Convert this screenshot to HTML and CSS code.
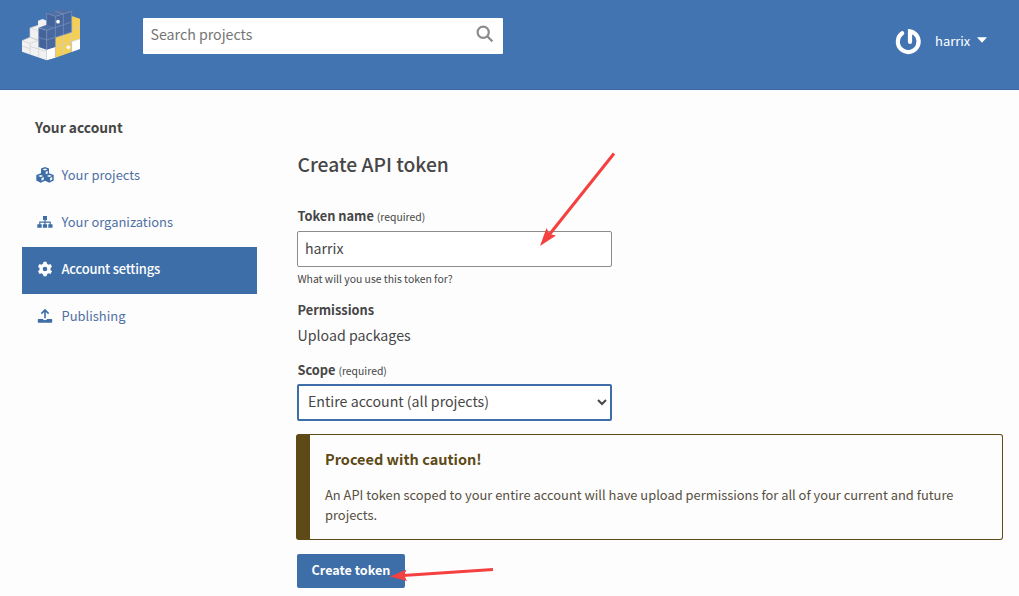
FILE: index.html
```html
<!DOCTYPE html>
<html lang="en">
<head>
<meta charset="utf-8">
<title>Create API token</title>
<link rel="stylesheet" href="styles.css">
</head>
<body>
<header class="site-header">
  <svg class="logo" viewBox="0 0 270 210">
    <path fill="#f1f1f1" d="M36 122L60 112V84L84 76V62L98 57L110 62V181L36 155Z"/>
    <path fill="#fff" d="M110 148L136 140V173L110 181ZM185 122L210 115V147L185 156Z"/>
    <path fill="#43639a" d="M86 84L110 91V149L86 141ZM110 40L136 49V83L110 75Z"/>
    <path fill="#4768a0" d="M110 91L136 82V49L185 34V98L136 114V141L110 149Z"/>
    <path fill="#4f70a4" d="M110 40L160 26L185 34L136 50ZM86 83L110 74L136 82L110 91Z"/>
    <path fill="#f3cf57" d="M136 113L185 97V48L210 56V116L185 124V156L136 173Z"/>
    <g fill="none" stroke="#cdcdd2" stroke-width="2">
      <path d="M36 122L60 130V163M60 112L86 121V171M60 84L86 93M36 122L60 112M60 130L86 121L60 112V84M60 139L110 155M84 76L60 84M36 138L60 146"/>
      <path d="M136 141V173M160 105V165M185 97V156M136 141L210 117M185 88L210 80"/>
    </g>
    <path fill="none" stroke="#8195bb" stroke-width="2" d="M86 84V141M86 84L110 91V149M110 91L185 66M110 120L185 96M136 49V141M160 42V105M185 34V97M110 40L136 49L185 34M135 33L160 42M86 112L110 120M110 40V75"/>
    <circle cx="144" cy="65" r="5.5" fill="#fff"/><circle cx="175" cy="142" r="5.5" fill="#fff"/>
  </svg>
  <form class="search">
    <input class="search-input" type="text" placeholder="Search projects">
    <svg class="search-icon" viewBox="0 0 18 18"><circle cx="7.2" cy="7.2" r="5.6"/><path d="M11.2 11.2L16.4 16.4"/></svg>
  </form>
  <div class="user">
    <svg class="avatar" viewBox="0 0 36 36"><path d="M12.200 11.200A10.400 10.400 0 1 0 20 9.400V20"/></svg>
    <span class="user-name">harrix</span>
    <svg class="caret" viewBox="0 0 10 6"><path d="M0 .3H10L5 5.8Z"/></svg>
  </div>
</header>
<main class="page">
  <nav class="sidebar">
    <h2 class="sidebar-title">Your account</h2>
    <a class="nav-item"><svg class="nav-icon" viewBox="0 0 18 16"><path fill-rule="evenodd" d="M9 0l4 1.600v4.600l4.700 1.900v5.400L13.300 15.800 9 13.800 4.700 15.800.3 13.500V8.100L5 6.200V1.600ZM6.600 2.500L9 3.400l2.400-.9L9 1.600ZM9.700 7.300l2-.9V3.900l-2 .8ZM2.200 9l2.500 1L7.200 9 4.700 8ZM10.800 9l2.500 1 2.500-1-2.500-1ZM5.500 13.700l2.300-1.100v-2.500l-2.300 1ZM14.100 13.700l2.100-1.100v-2.500l-2.100 1Z"/></svg>Your projects</a>
    <a class="nav-item"><svg class="nav-icon" viewBox="0 0 18 16"><path d="M7 2h4v4H9.600v1.600h5.200v2.700h1.700v3.500h-4.200v-3.500h1.300V8.800h-4v1.500h1.500v3.500H6.900v-3.500h1.500V8.800h-4v1.500h1.300v3.500H1.300v-3.500h1.900V7.600h5.200V6H7Z"/></svg>Your organizations</a>
    <a class="nav-item active"><svg class="nav-icon" viewBox="0 0 18 16"><path fill-rule="evenodd" d="M7.500.8h3l.5 2 1.500.9 2-.6 1.500 2.600-1.500 1.400v1.800l1.500 1.400-1.500 2.600-2-.6-1.500.9-.5 2h-3l-.5-2-1.500-.9-2 .6L2 10.300l1.500-1.400V7.100L2 5.700l1.500-2.600 2 .6L7 2.800ZM9 5.700a2.300 2.300 0 1 0 0 4.600 2.300 2.300 0 0 0 0-4.600Z"/></svg>Account settings</a>
    <a class="nav-item"><svg class="nav-icon" viewBox="0 0 18 16"><path d="M9 .8l4.200 4.300-1.100 1.100-2.300-2.300V10.300H8.200V3.900L5.900 6.200 4.800 5.100ZM2.500 11h4.300c.5 1.500 3.900 1.500 4.400 0h4.300q.7 0 .7.700v2.300q0 .7-.7.700h-13q-.7 0-.7-.7v-2.300q0-.7.7-.7Z"/></svg>Publishing</a>
  </nav>
  <section class="content">
    <h1 class="title">Create API token</h1>
    <label class="label">Token name <span class="required">(required)</span></label>
    <input class="field" type="text" value="harrix">
    <p class="help">What will you use this token for?</p>
    <h3 class="label permissions">Permissions</h3>
    <p class="permission-text">Upload packages</p>
    <label class="label scope">Scope <span class="required">(required)</span></label>
    <div class="field select"><span class="select-value">Entire account (all projects)</span><svg class="chevron" viewBox="0 0 10 7"><path d="M1 1l4 4 4-4"/></svg></div>
    <div class="callout">
      <h3 class="callout-title">Proceed with caution!</h3>
      <p class="callout-text">An API token scoped to your entire account will have upload permissions for all of your current and future projects.</p>
    </div>
    <button class="button" type="button">Create token</button>
  </section>
</main>
<svg class="annotations" viewBox="0 0 1019 596">
  <path class="shaft" d="M614 153.500L549 235M493 569.500L403 575.500"/>
  <path class="head" d="M540 246L546.500 228 549.500 234 556 235.500ZM390 576.500L406.500 569.500 404 575 407 581Z"/>
</svg>
</body>
</html>
```
FILE: styles.css
```css
* { box-sizing: border-box; }
body { margin: 0; height: 596px; overflow: hidden; position: relative; background: #fdfdfd; color: #464646; font-family: "Noto Sans CJK SC", "Noto Sans", sans-serif; font-size: 14.2px; }
h1, h2, h3, p { margin: 0; }
.site-header { height: 90px; background: #4274b2; border-bottom: 1px solid #3a679e; display: flex; align-items: flex-start; padding-left: 10px; }
.logo { width: 90px; height: 70px; flex: none; }
.search { width: 360px; height: 36px; margin: 18px 0 0 43px; background: #fff; border-radius: 1px; display: flex; padding: 0 9px 0 7.5px; }
.search-input { flex: 1; border: 0; outline: 0; padding: 0 0 4px; background: none; color: #777; font: inherit; }
.search-input::placeholder { color: #757575; opacity: 1; }
.search-icon { width: 18px; height: 18px; margin-top: 7px; fill: none; stroke: #8c8c8c; stroke-width: 2.2; }
.user { display: flex; align-items: center; margin: 22px 0 0 387px; height: 36px; color: #fff; font-size: 13px; }
.avatar { width: 36px; height: 36px; fill: none; stroke: #fff; stroke-width: 4.2; stroke-linecap: round; }
.user-name { margin-left: 9px; }
.caret { width: 10px; height: 6px; margin-left: 7px; fill: #fff; }
.page { display: flex; }
.sidebar { width: 235px; margin-left: 22px; padding-top: 26px; flex: none; }
.sidebar-title { font-size: 13.8px; line-height: 22px; font-weight: 600; padding-left: 13px; margin-bottom: 15px; }
.nav-item { height: 47px; display: flex; align-items: center; padding: 0 0 4px 14px; gap: 7.5px; color: #5070a5; font-size: 12.95px; }
.nav-icon { width: 18px; height: 16px; fill: #3d6ea8; }
.nav-item.active { background: #3d6ea8; color: #fff; font-weight: 500; letter-spacing: -.2px; }
.active .nav-icon { fill: #fff; }
.content { width: 707px; margin-left: 39px; padding: 58px 0 0 1px; display: flex; flex-direction: column; align-items: flex-start; }
.title, .label, .help, .permission-text { padding-left: .5px; }
.title { font-size: 19.25px; line-height: 32px; font-weight: 500; margin-bottom: 26px; }
.label { font-size: 12.8px; line-height: 20px; font-weight: 700; margin-bottom: 4px; }
.required { font-size: 10.4px; font-weight: 400; }
.field { width: 315px; height: 36px; border: 1px solid #8c8c8c; border-radius: 2px; background: #fff; font: inherit; color: #464646; padding: 0 7px 3px; }
.help { font-size: 10.4px; line-height: 16px; margin: 4px 0 13px; }
.permissions { margin-bottom: 3px; }
.permission-text { line-height: 24px; margin-bottom: 13px; }
.scope { margin-bottom: 3px; }
.select { height: 37px; border: 2px solid #3d6ea8; display: flex; align-items: center; justify-content: space-between; padding: 0 3px 0 9px; margin-bottom: 13px; }
.select-value { padding-bottom: 3px; }
.chevron { width: 10px; height: 7px; fill: none; stroke: #464646; stroke-width: 2; }
.callout { width: 707px; height: 106px; margin-left: -1px; border: 1px solid #5d4a17; border-left-width: 14px; border-radius: 3px; padding: 12px 15px; color: #5d4a17; }
.callout-title { font-size: 14.5px; line-height: 24px; font-weight: 600; margin-bottom: 14px; }
.callout-text { font-size: 12.9px; line-height: 20px; color: #57503f; }
.button { width: 108px; height: 34px; margin-top: 14px; border: 0; border-radius: 2px; background: #3d6ea8; color: #fff; font: inherit; font-size: 12.6px; font-weight: 600; padding: 0 0 3px; }
.annotations { position: absolute; left: 0; top: 0; width: 1019px; height: 596px; pointer-events: none; }
.shaft { fill: none; stroke: #f54040; stroke-width: 3; }
.head { fill: #f54040; }
```
